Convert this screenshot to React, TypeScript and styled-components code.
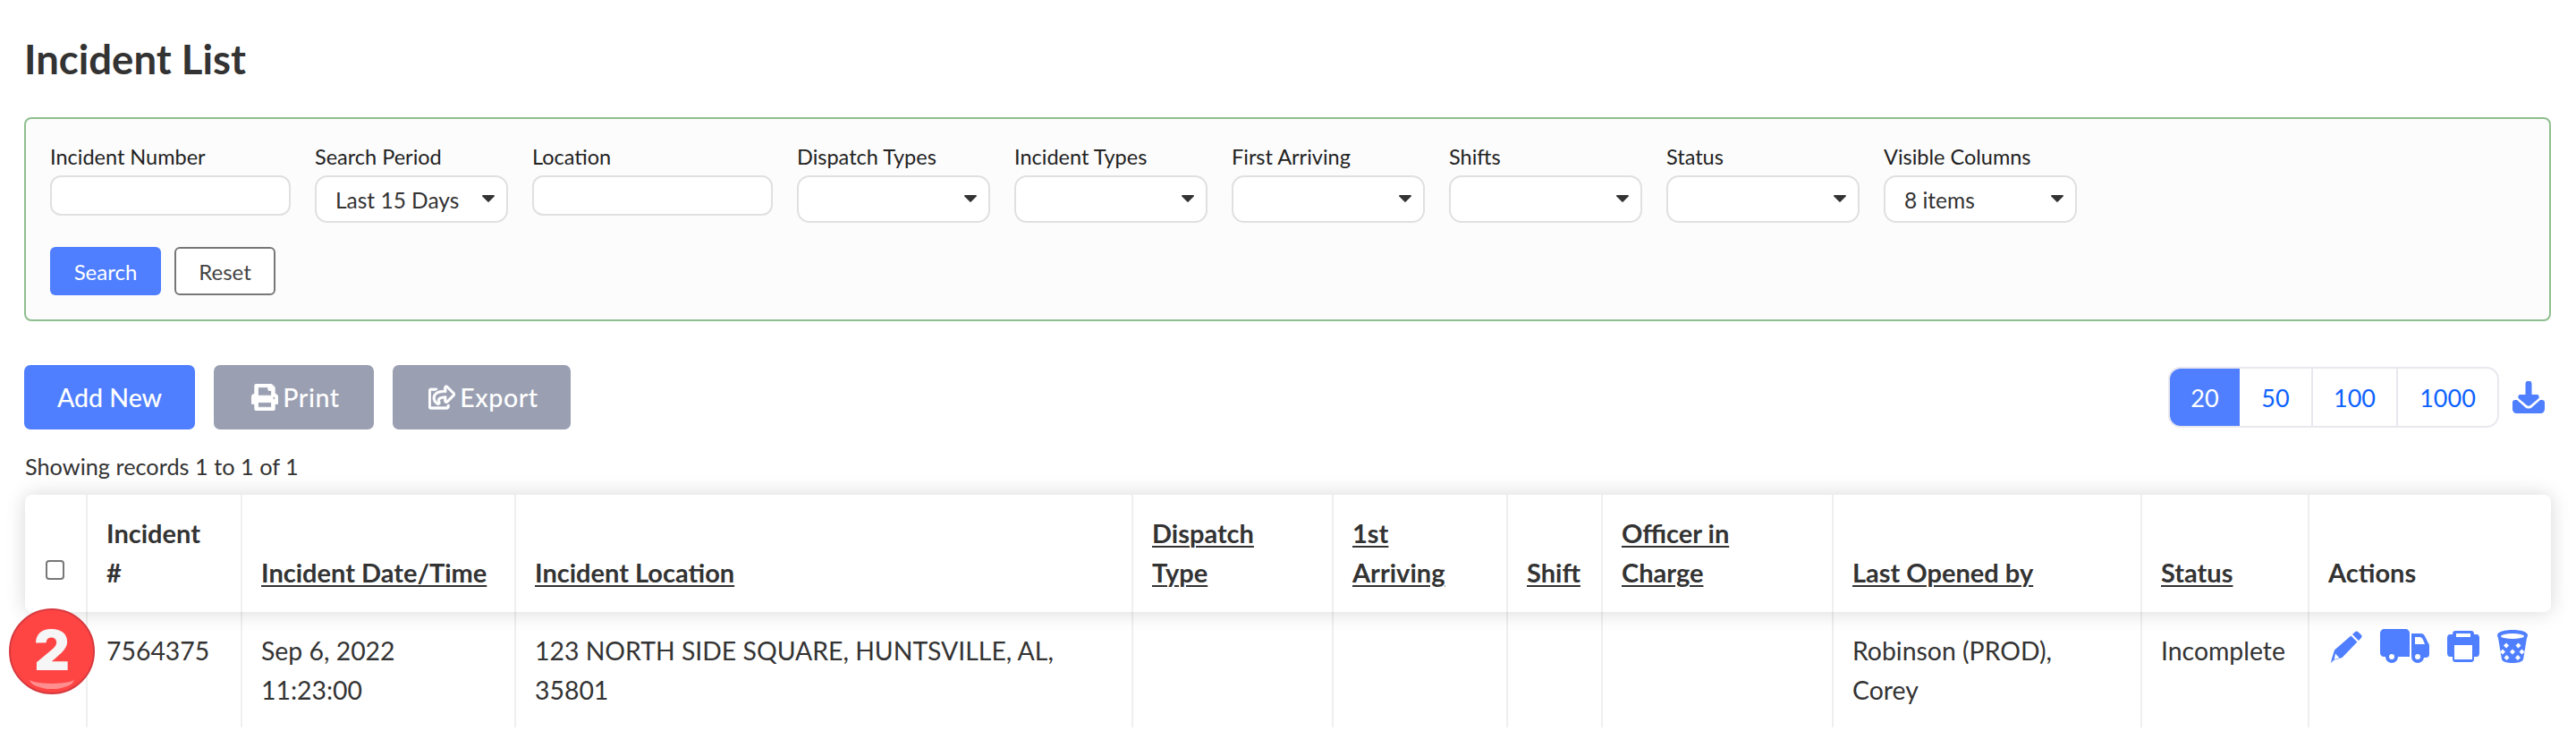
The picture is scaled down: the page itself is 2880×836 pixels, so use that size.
import React from "react";
import styled, { createGlobalStyle } from "styled-components";
import { FaPrint, FaRegShareSquare } from "react-icons/fa";

const Global = createGlobalStyle`
  html, body { margin: 0; padding: 0; background: #fff; }
  body { font-family: "Lato", "Liberation Sans", sans-serif; color: #333; }
`;

const Page = styled.div`
  width: 2880px;
  height: 836px;
  box-sizing: border-box;
  padding: 0 28px 0 27px;
  overflow: hidden;
`;
const Title = styled.h1`
  margin: 0;
  height: 131px;
  padding: 41px 0 0 0;
  box-sizing: border-box;
  font-size: 45.5px;
  line-height: 50px;
  font-weight: 700;
  color: #333;
`;
const FilterPanel = styled.section`
  height: 228px;
  box-sizing: border-box;
  border: 2px solid #8fbf8f;
  border-radius: 8px;
  background: #fcfcfc;
  padding: 25px 27px 0;
`;
const FilterRow = styled.div`
  display: flex;
  gap: 27px;
  align-items: flex-start;
`;
const Field = styled.div<{ $w: number }>`
  width: ${(p) => p.$w}px;
  flex: none;
`;
const Label = styled.label`
  display: block;
  height: 38px;
  font-size: 23.5px;
  line-height: 34px;
  color: #222;
  white-space: nowrap;
`;
const TextInput = styled.input`
  display: block;
  width: 100%;
  height: 45px;
  box-sizing: border-box;
  border: 2px solid #e0e0e0;
  border-radius: 12px;
  background: #fff;
`;
const SelectBox = styled.div`
  display: flex;
  align-items: center;
  justify-content: space-between;
  height: 53px;
  box-sizing: border-box;
  border: 2px solid #e0e0e0;
  border-radius: 14px;
  background: #fff;
  padding: 1px 13px 0 21px;
  font-size: 24.5px;
  color: #333;
  white-space: nowrap;
`;
const Caret = styled.svg`
  margin-left: auto;
  width: 14px;
  height: 8px;
  margin-top: -3px;
  fill: #333;
  flex: none;
`;
const FilterActions = styled.div`
  display: flex;
  gap: 15px;
  margin-top: 27px;
`;
const SearchButton = styled.button`
  width: 124px;
  height: 54px;
  border: 0;
  border-radius: 6px;
  background: #4f7fff;
  color: #fff;
  font: 24px "Lato", sans-serif;
`;
const ResetButton = styled.button`
  width: 113px;
  height: 54px;
  border: 2px solid #777;
  border-radius: 6px;
  background: #fff;
  color: #444;
  font: 24px "Lato", sans-serif;
`;
const Toolbar = styled.div`
  display: flex;
  align-items: center;
  margin-top: 49px;
  height: 72px;
`;
const ToolButton = styled.button<{ $w: number; $primary?: boolean }>`
  display: flex;
  align-items: center;
  justify-content: center;
  gap: 5px;
  width: ${(p) => p.$w}px;
  height: 72px;
  margin-right: 21px;
  padding: 0 0 0 ${(p) => (p.$primary ? 0 : 4)}px;
  border: 0;
  border-radius: 7px;
  background: ${(p) => (p.$primary ? "#4f7fff" : "#9a9fb2")};
  color: #fff;
  font: 500 28.5px "Lato", sans-serif;
  letter-spacing: ${(p) => (p.$primary ? 0 : 0.6)}px;
  svg { width: 30px; height: 30px; stroke: currentColor; stroke-width: 14px; }
`;
const Pager = styled.div`
  display: flex;
  margin-left: auto;
  height: 68px;
  box-sizing: border-box;
  border: 2px solid #e8e8ee;
  border-radius: 14px;
  overflow: hidden;
  background: #fff;
`;
const PageItem = styled.div<{ $w: number; $active?: boolean }>`
  display: flex;
  align-items: center;
  justify-content: center;
  width: ${(p) => p.$w}px;
  box-sizing: border-box;
  border-right: ${(p) => (p.$active ? "0" : "2px solid #e8e8ee")};
  background: ${(p) => (p.$active ? "#4f7fff" : "transparent")};
  color: ${(p) => (p.$active ? "#fff" : "#0d62ff")};
  font-size: 27px;
  &:last-child { border-right: 0; }
`;
const DownloadIcon = styled.svg`
  width: 36px;
  height: 36px;
  margin: 0 7px 0 15px;
  flex: none;
`;
const Records = styled.div`
  margin-top: 19px;
  height: 54px;
  font-size: 25.3px;
  line-height: 44px;
  color: #333;
  padding-left: 1px;
`;
const columns = "68px 173px 306px 690px 224px 195px 106px 258px 345px 187px 272px";
const HeaderRow = styled.div`
  position: relative;
  display: grid;
  grid-template-columns: ${columns};
  height: 131px;
  background: #fff;
  border-radius: 8px;
  box-shadow: 0 0 22px rgba(0, 0, 0, 0.16);
  margin-left: 1px;
`;
const BodyRow = styled.div`
  display: grid;
  grid-template-columns: ${columns};
  height: 129px;
  margin-left: 1px;
`;
const HeadCell = styled.div`
  display: flex;
  align-items: flex-end;
  box-sizing: border-box;
  padding: 21px 21px 23px 21px;
  border-left: 2px solid #efefef;
  font-size: 29px;
  line-height: 43.5px;
  font-weight: 700;
  color: #333;
  &:first-child { border-left: 0; }
`;
const CheckCell = styled(HeadCell)`
  padding: 0 0 36px 23px;
`;
const CheckBox = styled.span`
  width: 21px;
  height: 22px;
  box-sizing: border-box;
  border: 2px solid #777;
  border-radius: 4px;
  background: #fff;
`;
const SortLink = styled.span`
  text-decoration: underline;
  text-decoration-thickness: 2px;
  text-underline-offset: 3px;
`;
const BodyCell = styled.div`
  box-sizing: border-box;
  padding: 22px 18px 0 21px;
  border-left: 2px solid #efefef;
  font-size: 28.4px;
  line-height: 43.5px;
  color: #333;
  &:first-child { border-left: 0; }
`;
const ActionIcons = styled.div`
  display: flex;
  align-items: center;
  gap: 20px;
  margin: -3px 0 0 3px;
`;
const IconSvg = styled.svg`
  display: block;
  flex: none;
  fill: #4f7fff;
`;
const Badge = styled.div`
  position: absolute;
  left: -17px;
  top: 127px;
  width: 96px;
  height: 96px;
  box-sizing: border-box;
  border: 2px solid #d63a3f;
  border-radius: 50%;
  background: #ff4444;
  color: #f6f6f6;
  font: 900 62px/90px "Inter", "Lato", sans-serif;
  text-align: center;
  overflow: hidden;
  z-index: 2;
  &::after {
    content: "";
    position: absolute;
    left: 21px;
    width: 50px;
    bottom: 4px;
    height: 22px;
    box-sizing: border-box;
    border-radius: 50%;
    border-bottom: 6px solid rgba(255, 255, 255, 0.4);
  }
`;
const TableWrap = styled.div`
  position: relative;
`;

const Pencil = () => (
  <IconSvg width="35" height="36" viewBox="0 0 35 36">
    <path d="M27 1.200c1-1 2.400-1 3.400 0l3.400 3.400c1 1 1 2.500 0 3.500L31 11 24 4zM22.400 5.600l7 7L12.500 30 3 33l-3 3 1-5 3-9.500z" />
    <path fill="#fff" d="M5 25.500l4.500 5-5.800 1.800z" />
  </IconSvg>
);
const Truck = () => (
  <IconSvg width="55" height="39" viewBox="0 0 55 39">
    <path d="M5 0h23c3 0 5 2 5 5v26H6H4c-2 0-4-2-4-4V5c0-3 2-5 5-5z" />
    <path fillRule="evenodd" d="M35 5h10c3 0 4 1 5 3l4 8c1 1 1 2 1 4v8c0 3-2 4-4 4h-13c-2 0-3-1-3-3zm4 4v8h11l-2-5c-1-2-2-3-4-3z" />
    <circle cx="13" cy="31" r="7" />
    <circle cx="13" cy="31" r="3" fill="#fff" />
    <circle cx="42" cy="31" r="7" />
    <circle cx="42" cy="31" r="3" fill="#fff" />
  </IconSvg>
);
const Printer = () => (
  <IconSvg width="36" height="36" viewBox="0 0 36 36">
    <path fillRule="evenodd" d="M9 0h18c2 0 3 1 3 4h3c2 0 3 2 3 4v17c0 2-1 4-3 4h-3v2c0 3-1 4-4 4H10c-3 0-4-1-4-4v-2H3c-2 0-3-2-3-4V8c0-2 1-4 3-4h3c0-3 1-4 3-4zm1 3v4h16V3zM8 16v16h20V16z" />
  </IconSvg>
);
const diamonds = [
  [10, 17.500], [23.500, 17.500],
  [6, 24.500], [17, 24.500], [27.500, 24.500],
  [10.500, 31], [23, 31],
];
const Basket = () => (
  <IconSvg width="34" height="37" viewBox="0 0 34 37">
    <path d="M17 0c9 0 17 2 17 6 0 1-.5 2-1 3l-4 24c-1 3-7 4-12 4s-11-1-12-4L1 9C.5 8 0 7 0 6c0-4 8-6 17-6z" />
    <ellipse cx="17" cy="7" rx="13" ry="3" fill="#fff" />
    {diamonds.map(([x, y]) => (
      <path key={`${x}-${y}`} fill="#fff" d={`M${x} ${y - 3}l3 3-3 3-3-3z`} />
    ))}
  </IconSvg>
);

const filters = [
  { label: "Incident Number", w: 269, input: true },
  { label: "Search Period", w: 216, value: "Last 15 Days" },
  { label: "Location", w: 269, input: true },
  { label: "Dispatch Types", w: 216 },
  { label: "Incident Types", w: 216 },
  { label: "First Arriving", w: 216 },
  { label: "Shifts", w: 216 },
  { label: "Status", w: 216 },
  { label: "Visible Columns", w: 216, value: "8 items" },
];

export default function App() {
  return (
    <Page>
      <Global />
      <Title>Incident List</Title>
      <FilterPanel>
        <FilterRow>
          {filters.map((f) => (
            <Field key={f.label} $w={f.w}>
              <Label>{f.label}</Label>
              {f.input ? (
                <TextInput />
              ) : (
                <SelectBox>
                  {f.value}
                  <Caret viewBox="0 0 14 8"><path d="M1 0h12c.8 0 1.200.8.7 1.400L7.700 7.600c-.4.4-1 .4-1.400 0L.3 1.400C-.2.8.2 0 1 0z" /></Caret>
                </SelectBox>
              )}
            </Field>
          ))}
        </FilterRow>
        <FilterActions>
          <SearchButton>Search</SearchButton>
          <ResetButton>Reset</ResetButton>
        </FilterActions>
      </FilterPanel>
      <Toolbar>
        <ToolButton $w={191} $primary>Add New</ToolButton>
        <ToolButton $w={179}><FaPrint />Print</ToolButton>
        <ToolButton $w={199}><FaRegShareSquare />Export</ToolButton>
        <Pager>
          <PageItem $w={78} $active>20</PageItem>
          <PageItem $w={82}>50</PageItem>
          <PageItem $w={95}>100</PageItem>
          <PageItem $w={111}>1000</PageItem>
        </Pager>
        <DownloadIcon viewBox="0 0 36 36" fill="#4f7fff">
          <path d="M14.500 3a3.500 3.500 0 0 1 7 0v12h6c2 0 3 3 1.500 4.500L20 27c-1 1-3 1-4 0l-9-7.500C5.500 18 6.500 15 8.500 15h6z" />
          <path d="M0 24c0-2 1-3 3-3h2l9 8c2 2 6 2 8 0l9-8h2c2 0 3 1 3 3v7c0 3-2 5-5 5H5c-3 0-5-2-5-5z" />
        </DownloadIcon>
      </Toolbar>
      <Records>Showing records 1 to 1 of 1</Records>
      <TableWrap>
        <HeaderRow>
          <CheckCell><CheckBox /></CheckCell>
          <HeadCell><span>Incident<br />#</span></HeadCell>
          <HeadCell><SortLink>Incident Date/Time</SortLink></HeadCell>
          <HeadCell><SortLink>Incident Location</SortLink></HeadCell>
          <HeadCell><SortLink>Dispatch<br />Type</SortLink></HeadCell>
          <HeadCell><SortLink>1st<br />Arriving</SortLink></HeadCell>
          <HeadCell><SortLink>Shift</SortLink></HeadCell>
          <HeadCell><SortLink>Officer in Charge</SortLink></HeadCell>
          <HeadCell><SortLink>Last Opened by</SortLink></HeadCell>
          <HeadCell><SortLink>Status</SortLink></HeadCell>
          <HeadCell>Actions</HeadCell>
        </HeaderRow>
        <BodyRow>
          <BodyCell />
          <BodyCell>7564375</BodyCell>
          <BodyCell>Sep 6, 2022<br />11:23:00</BodyCell>
          <BodyCell>123 NORTH SIDE SQUARE, HUNTSVILLE, AL, 35801</BodyCell>
          <BodyCell />
          <BodyCell />
          <BodyCell />
          <BodyCell />
          <BodyCell>Robinson (PROD), Corey</BodyCell>
          <BodyCell>Incomplete</BodyCell>
          <BodyCell>
            <ActionIcons>
              <Pencil />
              <Truck />
              <Printer />
              <Basket />
            </ActionIcons>
          </BodyCell>
        </BodyRow>
        <Badge>2</Badge>
      </TableWrap>
    </Page>
  );
}
